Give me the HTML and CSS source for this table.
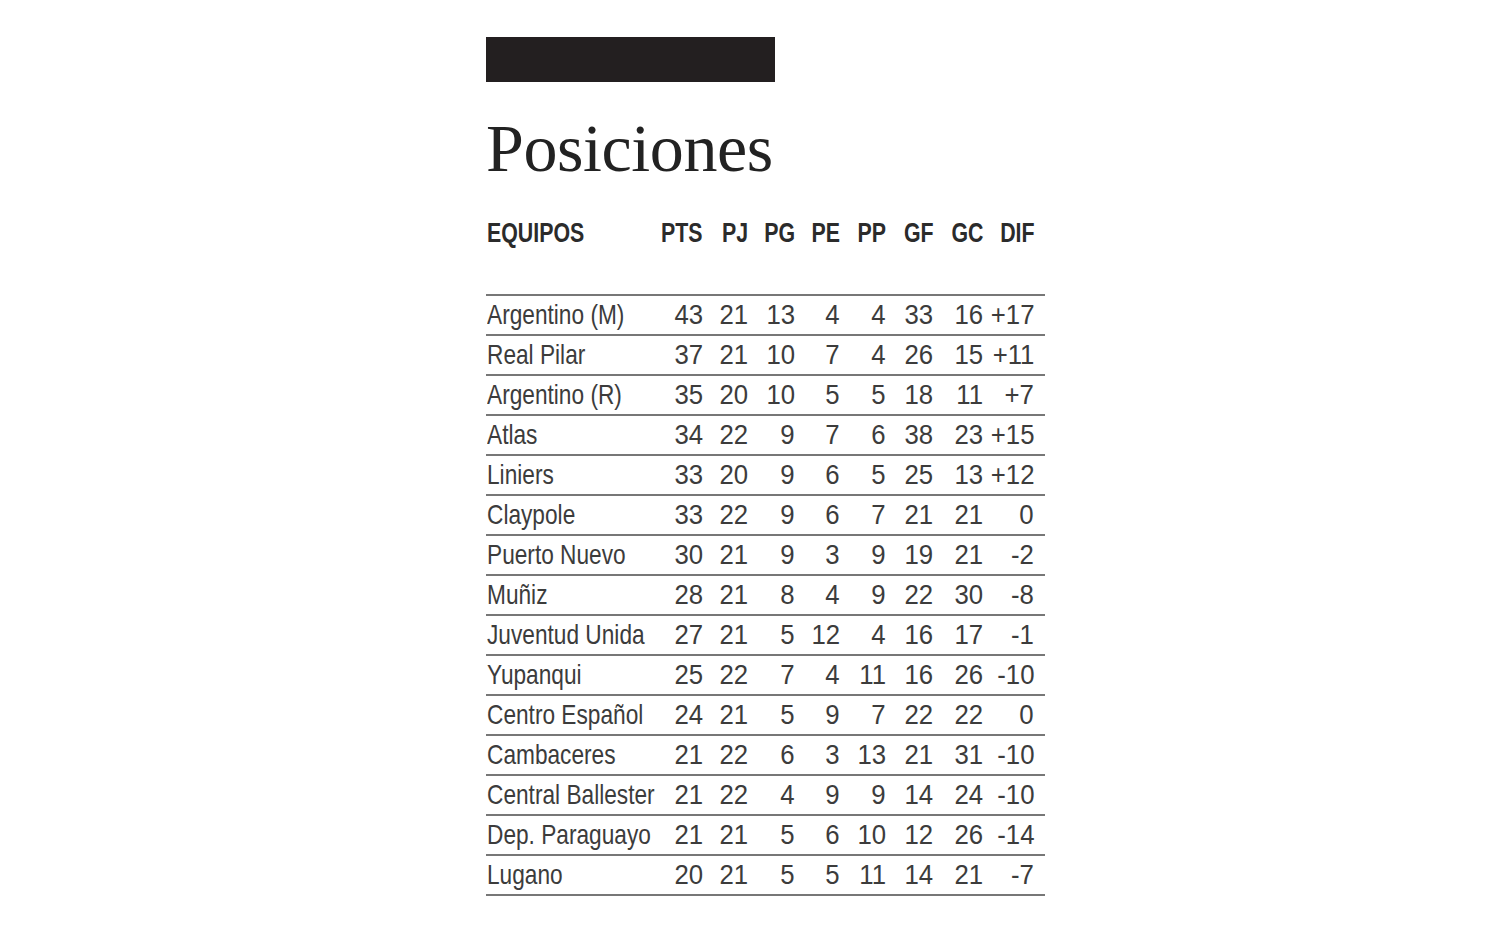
FILE: index.html
```html
<!DOCTYPE html>
<html lang="es">
<head>
<meta charset="utf-8">
<title>Posiciones</title>
<link rel="stylesheet" href="styles.css">
</head>
<body>
<div class="page">
  <div class="bar"></div>
  <h1 class="title">Posiciones</h1>
  <div class="table">
    <div class="row head">
      <div class="name"><span>EQUIPOS</span></div>
      <div class="num"><span>PTS</span></div>
      <div class="num"><span>PJ</span></div>
      <div class="num"><span>PG</span></div>
      <div class="num"><span>PE</span></div>
      <div class="num"><span>PP</span></div>
      <div class="num"><span>GF</span></div>
      <div class="num"><span>GC</span></div>
      <div class="num"><span>DIF</span></div>
    </div>
    <div class="body">
      <div class="row"><div class="name"><span>Argentino (M)</span></div><div class="num"><span>43</span></div><div class="num"><span>21</span></div><div class="num"><span>13</span></div><div class="num"><span>4</span></div><div class="num"><span>4</span></div><div class="num"><span>33</span></div><div class="num"><span>16</span></div><div class="num"><span>+17</span></div></div>
      <div class="row"><div class="name"><span>Real Pilar</span></div><div class="num"><span>37</span></div><div class="num"><span>21</span></div><div class="num"><span>10</span></div><div class="num"><span>7</span></div><div class="num"><span>4</span></div><div class="num"><span>26</span></div><div class="num"><span>15</span></div><div class="num"><span>+11</span></div></div>
      <div class="row"><div class="name"><span>Argentino (R)</span></div><div class="num"><span>35</span></div><div class="num"><span>20</span></div><div class="num"><span>10</span></div><div class="num"><span>5</span></div><div class="num"><span>5</span></div><div class="num"><span>18</span></div><div class="num"><span>11</span></div><div class="num"><span>+7</span></div></div>
      <div class="row"><div class="name"><span>Atlas</span></div><div class="num"><span>34</span></div><div class="num"><span>22</span></div><div class="num"><span>9</span></div><div class="num"><span>7</span></div><div class="num"><span>6</span></div><div class="num"><span>38</span></div><div class="num"><span>23</span></div><div class="num"><span>+15</span></div></div>
      <div class="row"><div class="name"><span>Liniers</span></div><div class="num"><span>33</span></div><div class="num"><span>20</span></div><div class="num"><span>9</span></div><div class="num"><span>6</span></div><div class="num"><span>5</span></div><div class="num"><span>25</span></div><div class="num"><span>13</span></div><div class="num"><span>+12</span></div></div>
      <div class="row"><div class="name"><span>Claypole</span></div><div class="num"><span>33</span></div><div class="num"><span>22</span></div><div class="num"><span>9</span></div><div class="num"><span>6</span></div><div class="num"><span>7</span></div><div class="num"><span>21</span></div><div class="num"><span>21</span></div><div class="num"><span>0</span></div></div>
      <div class="row"><div class="name"><span>Puerto Nuevo</span></div><div class="num"><span>30</span></div><div class="num"><span>21</span></div><div class="num"><span>9</span></div><div class="num"><span>3</span></div><div class="num"><span>9</span></div><div class="num"><span>19</span></div><div class="num"><span>21</span></div><div class="num"><span>-2</span></div></div>
      <div class="row"><div class="name"><span>Muñiz</span></div><div class="num"><span>28</span></div><div class="num"><span>21</span></div><div class="num"><span>8</span></div><div class="num"><span>4</span></div><div class="num"><span>9</span></div><div class="num"><span>22</span></div><div class="num"><span>30</span></div><div class="num"><span>-8</span></div></div>
      <div class="row"><div class="name"><span>Juventud Unida</span></div><div class="num"><span>27</span></div><div class="num"><span>21</span></div><div class="num"><span>5</span></div><div class="num"><span>12</span></div><div class="num"><span>4</span></div><div class="num"><span>16</span></div><div class="num"><span>17</span></div><div class="num"><span>-1</span></div></div>
      <div class="row"><div class="name"><span>Yupanqui</span></div><div class="num"><span>25</span></div><div class="num"><span>22</span></div><div class="num"><span>7</span></div><div class="num"><span>4</span></div><div class="num"><span>11</span></div><div class="num"><span>16</span></div><div class="num"><span>26</span></div><div class="num"><span>-10</span></div></div>
      <div class="row"><div class="name"><span>Centro Español</span></div><div class="num"><span>24</span></div><div class="num"><span>21</span></div><div class="num"><span>5</span></div><div class="num"><span>9</span></div><div class="num"><span>7</span></div><div class="num"><span>22</span></div><div class="num"><span>22</span></div><div class="num"><span>0</span></div></div>
      <div class="row"><div class="name"><span>Cambaceres</span></div><div class="num"><span>21</span></div><div class="num"><span>22</span></div><div class="num"><span>6</span></div><div class="num"><span>3</span></div><div class="num"><span>13</span></div><div class="num"><span>21</span></div><div class="num"><span>31</span></div><div class="num"><span>-10</span></div></div>
      <div class="row"><div class="name"><span>Central Ballester</span></div><div class="num"><span>21</span></div><div class="num"><span>22</span></div><div class="num"><span>4</span></div><div class="num"><span>9</span></div><div class="num"><span>9</span></div><div class="num"><span>14</span></div><div class="num"><span>24</span></div><div class="num"><span>-10</span></div></div>
      <div class="row"><div class="name"><span>Dep. Paraguayo</span></div><div class="num"><span>21</span></div><div class="num"><span>21</span></div><div class="num"><span>5</span></div><div class="num"><span>6</span></div><div class="num"><span>10</span></div><div class="num"><span>12</span></div><div class="num"><span>26</span></div><div class="num"><span>-14</span></div></div>
      <div class="row"><div class="name"><span>Lugano</span></div><div class="num"><span>20</span></div><div class="num"><span>21</span></div><div class="num"><span>5</span></div><div class="num"><span>5</span></div><div class="num"><span>11</span></div><div class="num"><span>14</span></div><div class="num"><span>21</span></div><div class="num"><span>-7</span></div></div>
    </div>
  </div>
</div>
</body>
</html>
```
FILE: styles.css
```css
html, body {
  margin: 0;
  padding: 0;
  background: #ffffff;
}

.page {
  padding: 37px 0 0 486px;
  width: 559px;
}

.bar {
  width: 289px;
  height: 45px;
  background: #231f20;
}

.title {
  margin: 32px 0 0 0;
  font-family: "Liberation Serif", "Times New Roman", serif;
  font-weight: normal;
  font-size: 68px;
  line-height: 68px;
  height: 68px;
  letter-spacing: -0.4px;
  color: #222222;
  white-space: nowrap;
}

.table {
  margin-top: 35px;
  font-family: "Liberation Sans", Arial, sans-serif;
}

.row {
  display: grid;
  grid-template-columns: 177px 40px 45px 47px 45px 46px 47px 50px 51px 11px;
  white-space: nowrap;
}

.row > div span {
  display: inline-block;
  flex: none;
}

.name {
  display: flex;
  justify-content: flex-start;
  padding-left: 1px;
}

.name span {
  transform: scaleX(0.81);
  transform-origin: left center;
}

.num {
  display: flex;
  justify-content: flex-end;
}

.num span {
  transform: scaleX(0.92);
  transform-origin: right center;
}

.head {
  font-size: 27px;
  font-weight: bold;
  line-height: 32px;
  height: 32px;
  color: #2b2b2b;
}

.head .num span,
.head .name span {
  transform: scaleX(0.79);
}

.body {
  margin-top: 45px;
  border-top: 2px solid #777777;
}

.body .row {
  font-size: 28px;
  line-height: 38px;
  height: 38px;
  color: #3c3c3c;
  border-bottom: 2px solid #777777;
}
```
